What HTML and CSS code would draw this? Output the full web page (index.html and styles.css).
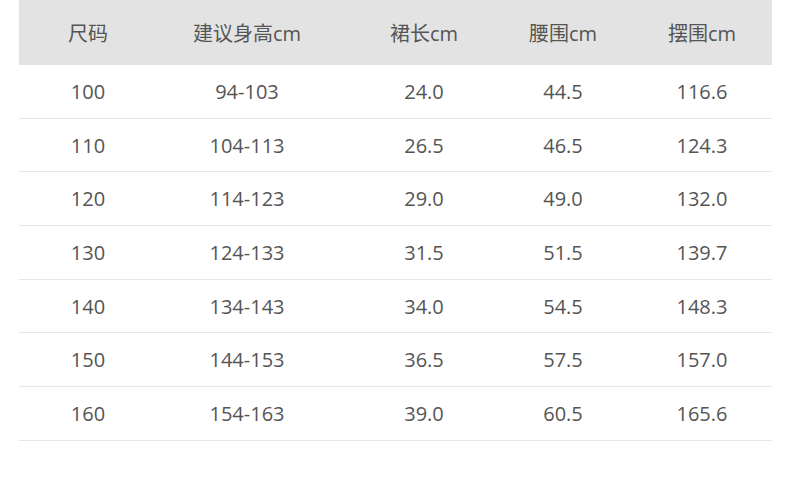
FILE: index.html
```html
<!DOCTYPE html>
<html lang="zh-CN">
<head>
<meta charset="utf-8">
<link rel="stylesheet" href="styles.css">
</head>
<body>
<div class="size-table">
  <div class="row head">
    <div class="cell">尺码</div><div class="cell">建议身高cm</div><div class="cell">裙长cm</div><div class="cell">腰围cm</div><div class="cell">摆围cm</div>
  </div>
  <div class="row"><div class="cell">100</div><div class="cell">94-103</div><div class="cell">24.0</div><div class="cell">44.5</div><div class="cell">116.6</div></div>
  <div class="row"><div class="cell">110</div><div class="cell">104-113</div><div class="cell">26.5</div><div class="cell">46.5</div><div class="cell">124.3</div></div>
  <div class="row"><div class="cell">120</div><div class="cell">114-123</div><div class="cell">29.0</div><div class="cell">49.0</div><div class="cell">132.0</div></div>
  <div class="row"><div class="cell">130</div><div class="cell">124-133</div><div class="cell">31.5</div><div class="cell">51.5</div><div class="cell">139.7</div></div>
  <div class="row"><div class="cell">140</div><div class="cell">134-143</div><div class="cell">34.0</div><div class="cell">54.5</div><div class="cell">148.3</div></div>
  <div class="row"><div class="cell">150</div><div class="cell">144-153</div><div class="cell">36.5</div><div class="cell">57.5</div><div class="cell">157.0</div></div>
  <div class="row"><div class="cell">160</div><div class="cell">154-163</div><div class="cell">39.0</div><div class="cell">60.5</div><div class="cell">165.6</div></div>
</div>
</body>
</html>
```
FILE: styles.css
```css
html, body {
  margin: 0;
  padding: 0;
  background: #fff;
}
body {
  font-family: "Open Sans", "Noto Sans CJK SC", sans-serif;
  color: #555;
  font-size: 20px;
}
.size-table {
  width: 753px;
  margin-left: 19px;
}
.row {
  display: grid;
  grid-template-columns: 138px 180px 174px 104px 157px;
  align-items: center;
  height: 53.7px;
  box-sizing: border-box;
  border-bottom: 1px solid #e6e6e6;
}
.row.head {
  height: 65px;
  background: #e3e3e3;
  border-bottom: none;
}
.cell {
  text-align: center;
  white-space: nowrap;
}
.cell:last-child {
  padding-left: 17px;
}
```
